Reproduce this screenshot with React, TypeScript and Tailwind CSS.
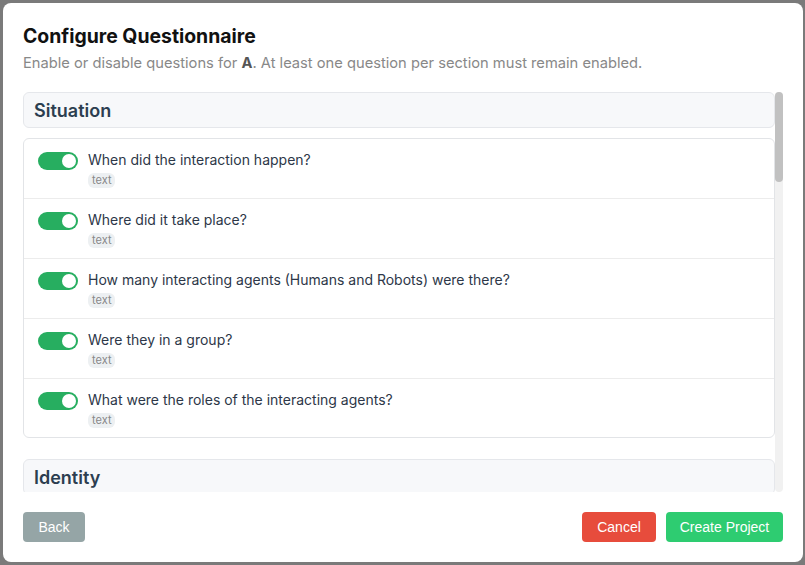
import React from 'react';

const sections = [
    {
        title: 'Situation',
        questions: [
            'When did the interaction happen?',
            'Where did it take place?',
            'How many interacting agents (Humans and Robots) were there?',
            'Were they in a group?',
            'What were the roles of the interacting agents?',
        ],
    },
    {
        title: 'Identity',
        questions: [] as string[],
    },
];

const Toggle: React.FC = () => (
    <div className="w-10 h-[18px] shrink-0 rounded-full bg-[#27ae60] flex items-center justify-end px-[2px] mt-[1px]">
        <div className="w-[14px] h-[14px] rounded-full bg-white" />
    </div>
);

const App: React.FC = () => {
    return (
        <div className="w-[805px] h-[565px] bg-[#7a7a7a] pl-[3px] pr-[2px] pt-[3px] pb-[3px] font-['Inter',sans-serif]">
            <div className="h-full bg-white rounded-lg flex flex-col pl-5 pr-[20px] pt-[19px] pb-5">
                <h2 className="text-[19.4px] leading-[28px] font-bold text-[#111]">Configure Questionnaire</h2>
                <p className="mt-[3px] text-[14.7px] leading-5 text-[#888]">
                    Enable or disable questions for <span className="font-bold text-[#555]">A</span>. At least one question per section must remain enabled.
                </p>
                <div className="mt-[19px] h-[400px] flex">
                    <div className="flex-1 overflow-hidden">
                        {sections.map((s, si) => (
                            <div key={s.title} className={si > 0 ? 'mt-[21px]' : ''}>
                                <div className="h-9 border border-[#e5e7eb] rounded-md bg-[#f7f8fa] px-[10px] flex items-center text-[18px] font-semibold text-[#2c3e50]">
                                    {s.title}
                                </div>
                                {s.questions.length > 0 && (
                                    <div className="mt-[10px] border border-[#e2e4e7] rounded-md">
                                        {s.questions.map((q, qi) => {
                                            const last = qi === s.questions.length - 1;
                                            return (
                                                <div
                                                    key={q}
                                                    className={`flex gap-[10px] pl-[14px] pt-3 ${last ? 'h-[58px]' : 'h-[60px] border-b border-[#ececec]'}`}
                                                >
                                                    <Toggle />
                                                    <div className="flex flex-col items-start">
                                                        <div className="text-[14px] leading-5 -mt-[1px] text-[#2d3748]">{q}</div>
                                                        <span className="mt-[3px] px-1 rounded-md bg-[#edf0f2] text-[11px] leading-[15px] text-[#888]">text</span>
                                                    </div>
                                                </div>
                                            );
                                        })}
                                    </div>
                                )}
                            </div>
                        ))}
                    </div>
                    <div className="w-2 h-full rounded-full bg-[#f1f1f1]">
                        <div className="h-[90px] rounded-full bg-[#c1c1c1]" />
                    </div>
                </div>
                <div className="mt-5 flex items-center font-['Liberation_Sans',sans-serif] text-[14px] text-white">
                    <button className="h-[30px] w-[62px] rounded bg-[#95a5a6]">Back</button>
                    <div className="flex-1" />
                    <button className="h-[30px] w-[74px] rounded bg-[#e74c3c]">Cancel</button>
                    <button className="ml-[10px] h-[30px] w-[117px] rounded bg-[#2ecc71]">Create Project</button>
                </div>
            </div>
        </div>
    );
};

export default App;
